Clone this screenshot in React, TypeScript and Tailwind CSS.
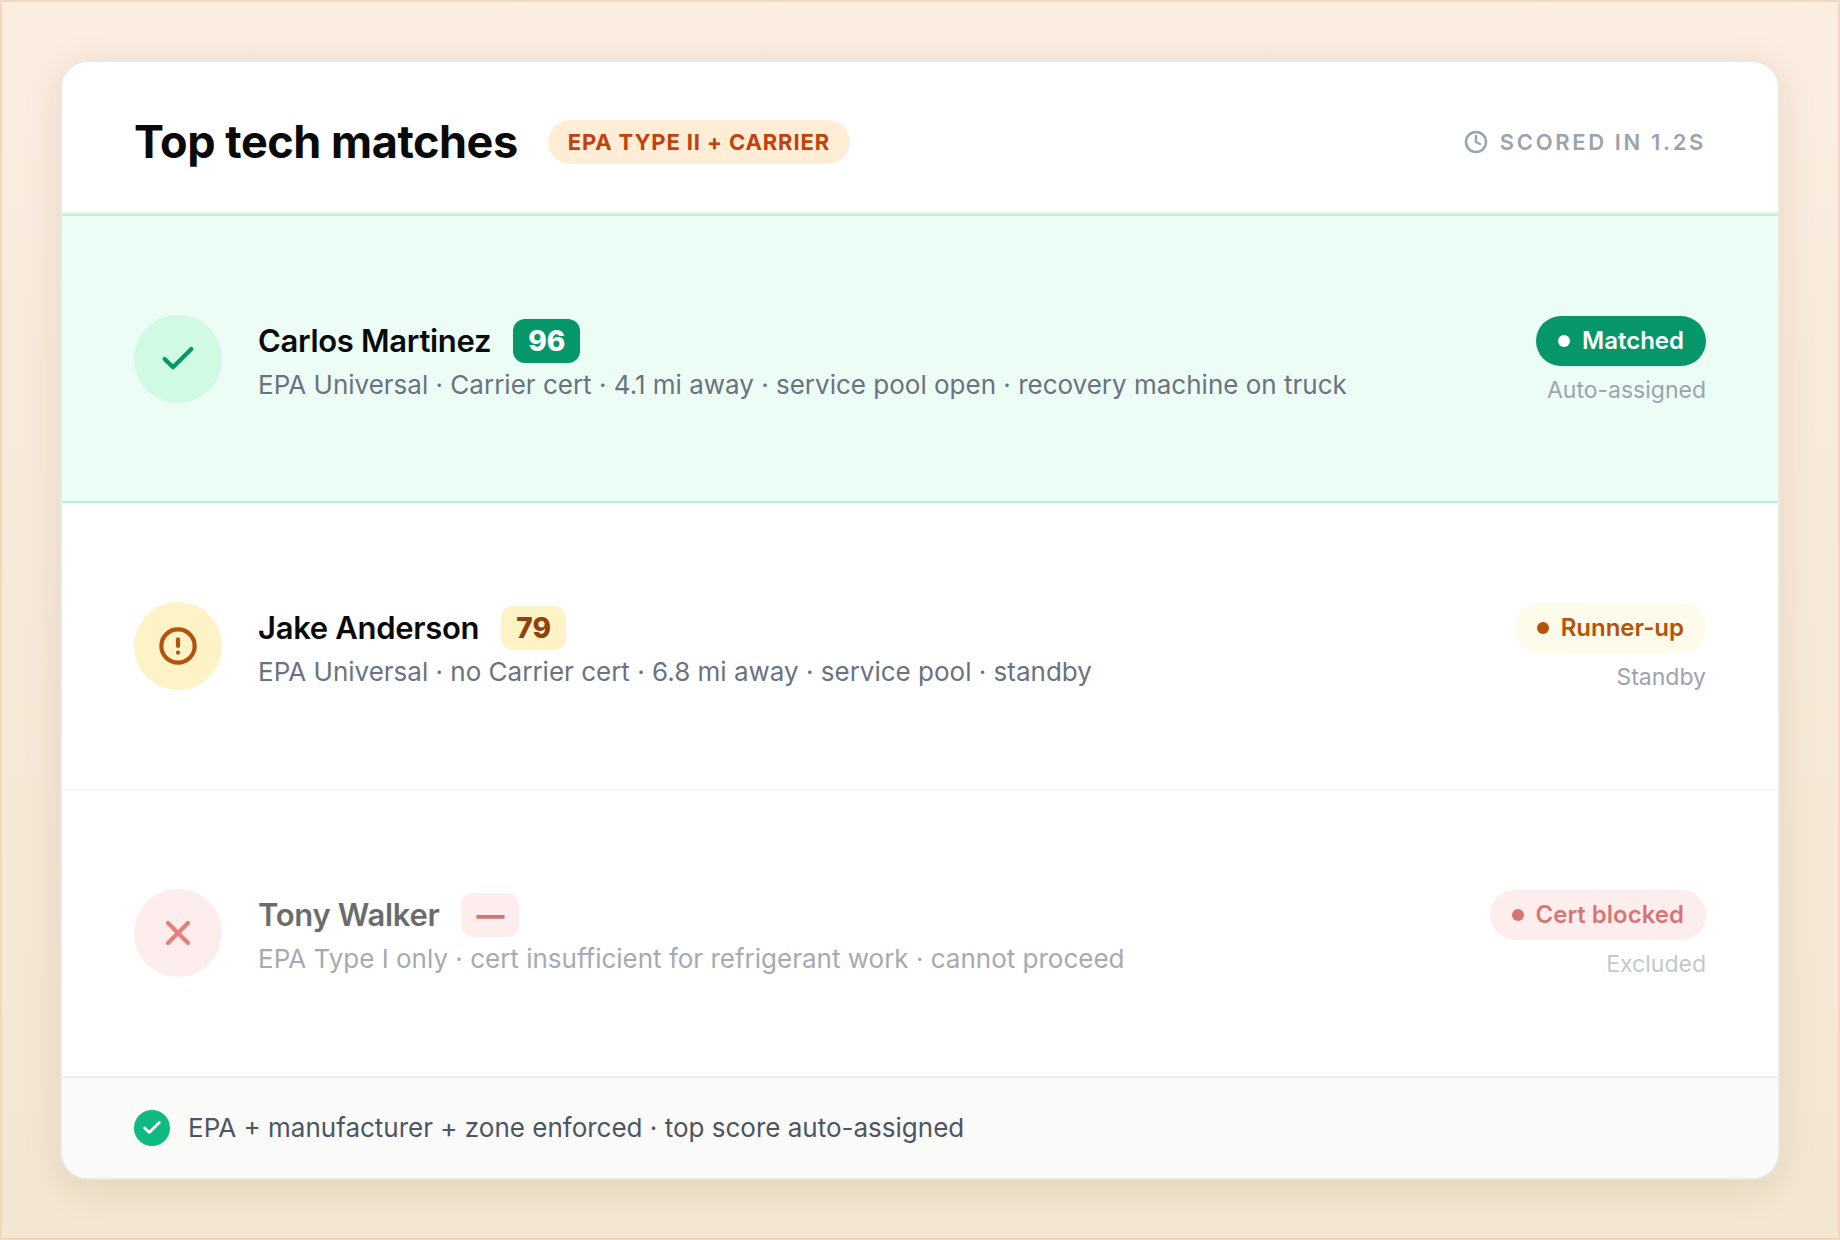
import { Check, CircleAlert, Clock, X } from 'lucide-react';

const techs = [
  {
    id: 'carlos',
    name: 'Carlos Martinez',
    score: '96',
    detail: 'EPA Universal · Carrier cert · 4.1 mi away · service pool open · recovery machine on truck',
    status: 'Matched',
    note: 'Auto-assigned',
    icon: Check,
    row: 'border-y-2 border-[#bbf2d3] bg-[#ebfdf5]',
    content: '',
    circle: 'bg-[#d1fae5] text-[#059669]',
    badge: 'bg-[#059669] text-white',
    pill: 'bg-[#059669] text-white',
    dot: 'bg-white'
  },
  {
    id: 'jake',
    name: 'Jake Anderson',
    score: '79',
    detail: 'EPA Universal · no Carrier cert · 6.8 mi away · service pool · standby',
    status: 'Runner-up',
    note: 'Standby',
    icon: CircleAlert,
    row: 'border-b-2 border-[#f7f7f7]',
    content: '',
    circle: 'bg-[#fef3c7] text-[#b45309]',
    badge: 'bg-[#fef3c7] text-[#92400e]',
    pill: 'bg-[#fffbeb] text-[#b45309]',
    dot: 'bg-[#b45309]'
  },
  {
    id: 'tony',
    name: 'Tony Walker',
    score: '—',
    detail: 'EPA Type I only · cert insufficient for refrigerant work · cannot proceed',
    status: 'Cert blocked',
    note: 'Excluded',
    icon: X,
    row: '',
    content: 'opacity-60',
    circle: 'bg-[#fee2e2] text-[#dc2626]',
    badge: 'bg-[#fee2e2] text-[#b91c1c]',
    pill: 'bg-[#fee2e2] text-[#b91c1c]',
    dot: 'bg-[#b91c1c]'
  }
];

export default function App() {
  return (
    <div className="flex min-h-screen flex-col border-2 border-[#f1d8c0] bg-linear-to-b from-[#fbede0] to-[#f4e6d0] p-[58px] font-['Inter',sans-serif]">
      <main className="flex flex-1 flex-col overflow-hidden rounded-[28px] border-2 border-[#ebe9e3] bg-white shadow-[0_8px_40px_rgba(60,30,10,0.10)]">
        <header className="flex items-center justify-between border-b-2 border-[#efeeea] px-18 pt-13 pb-[42px]">
          <div className="flex items-center gap-[30px]">
            <h1 className="text-[45px] leading-14 font-bold tracking-[-0.01em] text-[#0a0a0a]">Top tech matches</h1>
            <span className="rounded-full bg-[#ffedd5] px-5 py-2 text-[22px] leading-7 font-bold tracking-[0.04em] text-[#c2410c]">
              EPA TYPE II + CARRIER
            </span>
          </div>
          <div className="flex items-center gap-3 text-[22px] leading-7 font-semibold tracking-[0.12em] text-[#9ca3af]">
            <Clock size={24} strokeWidth={2.5} />
            SCORED IN 1.2S
          </div>
        </header>

        <ul className="flex flex-1 flex-col">
          {techs.map((tech) => (
            <li key={tech.id} className={`flex flex-1 px-18 ${tech.row}`}>
              <div className={`flex flex-1 items-center gap-9 ${tech.content}`}>
                <div className={`flex size-22 shrink-0 items-center justify-center rounded-full ${tech.circle}`}>
                  <tech.icon size={40} strokeWidth={2.5} />
                </div>
                <div className="flex-1 pt-1">
                  <div className="flex items-center gap-[22px]">
                    <h2 className="text-[31px] leading-11 font-semibold tracking-[-0.01em] text-[#0a0a0a]">{tech.name}</h2>
                    <span className={`rounded-xl px-[15px] text-[28px] leading-11 font-extrabold ${tech.badge}`}>
                      {tech.score}
                    </span>
                  </div>
                  <p className="mt-1 text-[26px] leading-9 text-[#6b7280]">{tech.detail}</p>
                </div>
                <div className="flex flex-col items-end gap-2.5 pt-0.5">
                  <span className={`flex items-center gap-3 rounded-full px-[22px] text-2xl leading-[50px] font-semibold ${tech.pill}`}>
                    <span className={`size-3 rounded-full ${tech.dot}`} />
                    {tech.status}
                  </span>
                  <span className="text-[23px] leading-7 text-[#9ca3af]">{tech.note}</span>
                </div>
              </div>
            </li>
          ))}
        </ul>

        <footer className="flex items-center gap-[18px] border-t-2 border-[#efeeea] bg-[#fafaf8] px-18 py-8 text-[26px] leading-9 text-[#4b5563]">
          <span className="flex size-9 items-center justify-center rounded-full bg-[#10b981] text-white">
            <Check size={22} strokeWidth={3} />
          </span>
          EPA + manufacturer + zone enforced · top score auto-assigned
        </footer>
      </main>
    </div>
  );
}
